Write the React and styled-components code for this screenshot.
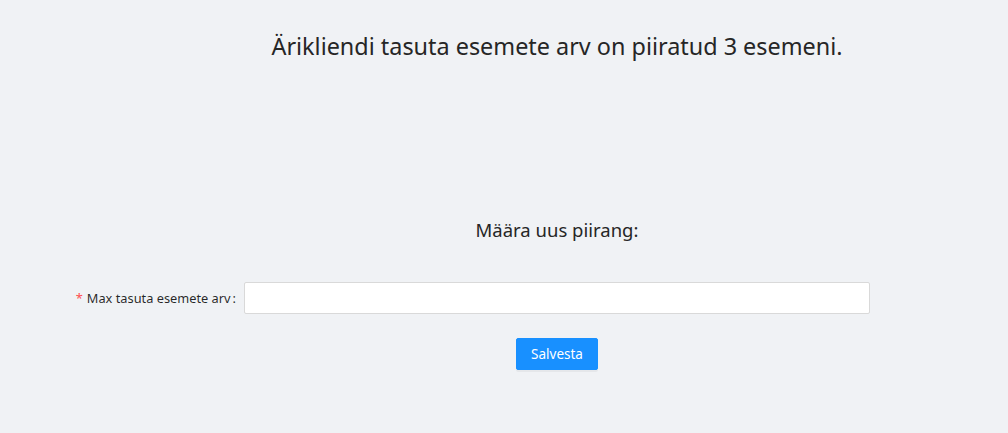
import React from "react";
import styled, { createGlobalStyle } from "styled-components";

const Global = createGlobalStyle`
  html, body { margin: 0; padding: 0; background: #f0f2f5; }
  body { font-family: "Noto Sans", "Open Sans", sans-serif; color: rgba(0,0,0,0.85); }
`;

const Page = styled.div`
  min-height: 433px;
  box-sizing: border-box;
  padding: 28px 0 0 106px;
  display: flex;
  flex-direction: column;
`;

const Title = styled.h2`
  margin: 0;
  text-align: center;
  font-size: 23.4px;
  line-height: 36px;
  font-weight: 400;
  color: #262626;
`;

const SubTitle = styled.h3`
  margin: 153px 0 0;
  text-align: center;
  font-size: 18.5px;
  line-height: 26px;
  font-weight: 400;
  color: #262626;
`;

const Form = styled.form`
  margin-top: 39px;
  display: flex;
  flex-direction: column;
`;

const FormRow = styled.div`
  display: flex;
  align-items: center;
  margin-bottom: 24px;
`;

const LabelCol = styled.div`
  width: 138px;
  flex: none;
  display: flex;
  justify-content: flex-end;
`;

const Label = styled.label`
  flex: none;
  font-size: 12.8px;
  line-height: 32px;
  white-space: nowrap;
  color: rgba(0,0,0,0.85);
  &::before {
    content: "*";
    color: #ff4d4f;
    margin-right: 4px;
  }
  &::after {
    content: ":";
    margin: 0 8px 0 2px;
  }
`;

const Input = styled.input`
  width: 626px;
  height: 32px;
  box-sizing: border-box;
  border: 1px solid #d9d9d9;
  border-radius: 2px;
  background: #fff;
  padding: 4px 11px;
  font-size: 14px;
  font-family: inherit;
  outline: none;
`;

const Actions = styled.div`
  display: flex;
  justify-content: center;
`;

const Button = styled.button`
  height: 32px;
  width: 82px;
  padding: 0;
  background: #1890ff;
  border: 1px solid #1890ff;
  border-radius: 2px;
  color: #fff;
  font-size: 13.5px;
  font-family: inherit;
  box-shadow: 0 2px 0 rgba(0,0,0,0.045);
  cursor: pointer;
`;

export default function App() {
  return (
    <>
      <Global />
      <Page>
        <Title>Ärikliendi tasuta esemete arv on piiratud 3 esemeni.</Title>
        <SubTitle>Määra uus piirang:</SubTitle>
        <Form onSubmit={(e) => e.preventDefault()}>
          <FormRow>
            <LabelCol>
              <Label htmlFor="max">Max tasuta esemete arv</Label>
            </LabelCol>
            <Input id="max" type="text" />
          </FormRow>
          <Actions>
            <Button type="submit">Salvesta</Button>
          </Actions>
        </Form>
      </Page>
    </>
  );
}
